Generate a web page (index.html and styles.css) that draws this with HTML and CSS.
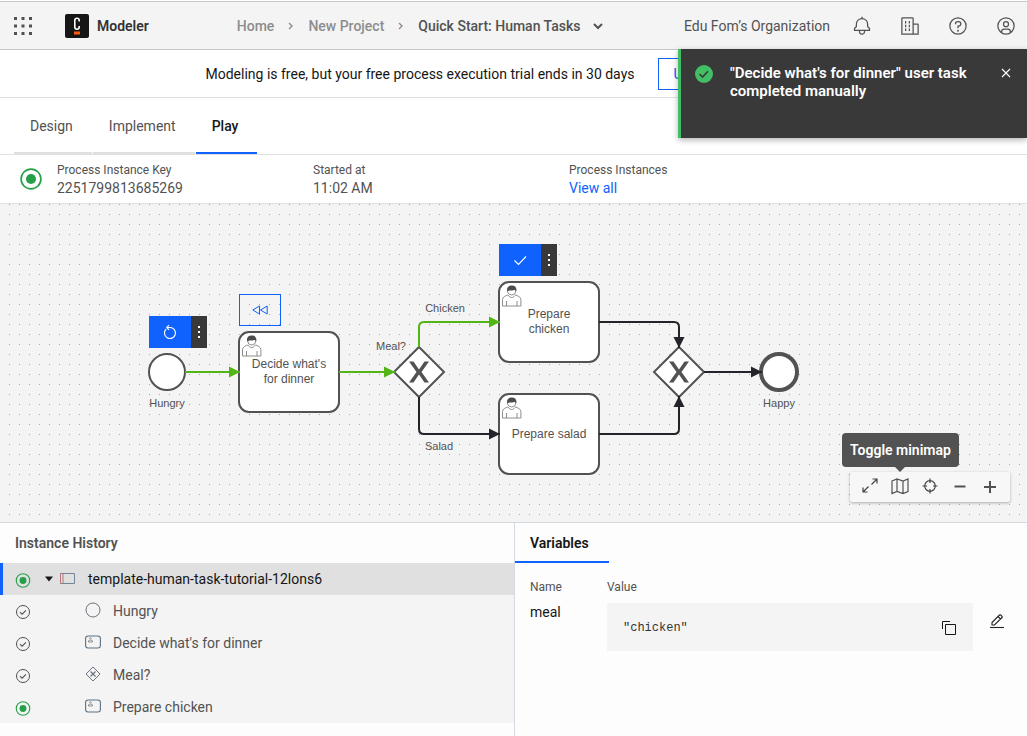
FILE: index.html
```html
<!DOCTYPE html>
<html lang="en">
<head>
<meta charset="utf-8">
<meta name="viewport" content="width=device-width, initial-scale=1">
<title>Modeler</title>
<link rel="stylesheet" href="styles.css">
</head>
<body>
<svg class="defs" aria-hidden="true">
  <symbol id="i-active" viewBox="0 0 20 20"><circle cx="10" cy="10" r="9" fill="none" stroke="#24a148" stroke-width="1.5"/><circle cx="10" cy="10" r="4.6" fill="#24a148"/></symbol>
  <symbol id="i-done" viewBox="0 0 16 16"><circle cx="8" cy="8" r="6.500" fill="none" stroke="#525252" stroke-width="1"/><path d="M5 8.200l2.100 2L11 6.300" fill="none" stroke="#525252" stroke-width="1.100"/></symbol>
  <symbol id="i-task" viewBox="0 0 16 16"><rect x=".6" y="2" width="14.800" height="12" rx="2.500" fill="none" stroke="#5a7187" stroke-width="1.100"/><path d="M3.500 8V6.800l1.500-.8h1l1.500.8V8zM4.500 4.800a1 1 0 0 1 2 0" fill="none" stroke="#777" stroke-width=".8"/></symbol>
  <symbol id="i-gate" viewBox="0 0 16 16"><path d="M8 1l7 7-7 7-7-7z" fill="none" stroke="#6b7480" stroke-width="1"/><path d="M5.500 5.500l5 5M10.500 5.500l-5 5" stroke="#6b7480" stroke-width="1.200"/></symbol>
  <symbol id="i-user" viewBox="0 0 20 22"><path d="M.5 21v-6.500c0-2.500 3.500-4 5.300-4.500l1 1c1.500 2 4.300 2 5.800 0l1-1c1.500.5 5.300 2 5.300 4.500V21zM4.500 21v-5M15 21v-5" fill="#fff" stroke="#8d8d8d" stroke-width="1"/><circle cx="9.700" cy="6" r="4" fill="#fff" stroke="#8d8d8d" stroke-width="1"/><path d="M5 6.500C4.500 1 8 .6 9.700.6c1.700 0 5.200.4 4.700 5.900-1-1.500-2-1.600-3-1.200-2 .6-4.500-.6-6.400 1.200z" fill="#4c4c4c"/></symbol>
  <symbol id="i-kebab" viewBox="0 0 16 16"><path d="M7 2h2v2H7zM7 7h2v2H7zM7 12h2v2H7z" fill="#fff"/></symbol>
</svg>

<header class="topbar">
  <button class="icon-btn switcher" aria-label="App switcher"><svg width="20" height="20" viewBox="0 0 20 20" fill="#525252"><path d="M1 1h3v3H1zM8.500 1h3v3h-3zM16 1h3v3h-3zM1 8.500h3v3H1zM8.500 8.500h3v3h-3zM16 8.500h3v3h-3zM1 16h3v3H1zM8.500 16h3v3h-3zM16 16h3v3h-3z"/></svg></button>
  <a class="brand" href="#">
    <svg width="24" height="24" viewBox="0 0 24 24"><rect width="24" height="24" rx="2" fill="#161616"/><path d="M14.200 7.500V6.500a2.200 2.200 0 0 0-4.400 0v6.500a2.200 2.200 0 0 0 4.400 0v-1" fill="none" stroke="#fff" stroke-width="1.600"/><path d="M9 17.500h6v3H9z" fill="#fc5d0d"/></svg>
    <span>Modeler</span>
  </a>
  <nav class="crumbs" aria-label="Breadcrumb">
    <a href="#">Home</a>
    <svg width="6" height="8" viewBox="0 0 6 8"><path d="M1 1l3 3-3 3" fill="none" stroke="#8d8d8d" stroke-width="1.400"/></svg>
    <a href="#">New Project</a>
    <svg width="6" height="8" viewBox="0 0 6 8"><path d="M1 1l3 3-3 3" fill="none" stroke="#8d8d8d" stroke-width="1.400"/></svg>
    <button class="current">Quick Start: Human Tasks <svg width="10" height="8" viewBox="0 0 10 8"><path d="M1 2l4 4 4-4" fill="none" stroke="#525252" stroke-width="2"/></svg></button>
  </nav>
  <span class="org">Edu Fom’s Organization</span>
  <div class="tools">
    <button class="icon-btn" aria-label="Notifications"><svg width="20" height="20" viewBox="0 0 32 32" fill="#525252"><path d="M28.707 19.293L26 16.586V13a10.014 10.014 0 0 0-9-9.950V1h-2v2.050A10.014 10.014 0 0 0 6 13v3.586l-2.707 2.707A1 1 0 0 0 3 20v3a1 1 0 0 0 1 1h7v.777a5.152 5.152 0 0 0 4.500 5.199A5.006 5.006 0 0 0 21 25v-1h7a1 1 0 0 0 1-1v-3a1 1 0 0 0-.293-.707zM19 25a3 3 0 0 1-6 0v-1h6zm8-3H5v-1.586l2.707-2.707A1 1 0 0 0 8 17v-4a8 8 0 0 1 16 0v4a1 1 0 0 0 .293.707L27 20.414z"/></svg></button>
    <button class="icon-btn" aria-label="Organization"><svg width="20" height="20" viewBox="0 0 32 32" fill="#525252"><path d="M8 8h2v4H8zM8 14h2v4H8zM14 8h2v4h-2zM14 14h2v4h-2zM8 20h2v4H8zM14 20h2v4h-2z"/><path d="M30 14a2 2 0 0 0-2-2h-6V4a2 2 0 0 0-2-2H4a2 2 0 0 0-2 2v26h28zM4 4h16v24H4zm18 24V14h6v14z"/></svg></button>
    <button class="icon-btn" aria-label="Help"><svg width="20" height="20" viewBox="0 0 32 32" fill="#525252"><path d="M16 2a14 14 0 1 0 14 14A14 14 0 0 0 16 2zm0 26a12 12 0 1 1 12-12 12 12 0 0 1-12 12z"/><circle cx="16" cy="23.500" r="1.500"/><path d="M17 8h-1.500a4.490 4.490 0 0 0-4.500 4.500v.5h2v-.5a2.500 2.500 0 0 1 2.500-2.500H17a2.500 2.500 0 0 1 0 5h-2v4.500h2V17a4.500 4.500 0 0 0 0-9z"/></svg></button>
    <button class="icon-btn" aria-label="Account"><svg width="20" height="20" viewBox="0 0 32 32" fill="#525252"><path d="M16 8a5 5 0 1 0 5 5 5 5 0 0 0-5-5zm0 8a3 3 0 1 1 3-3 3 3 0 0 1-3 3z"/><path d="M16 2a14 14 0 1 0 14 14A14 14 0 0 0 16 2zm-6 24.377V25a3 3 0 0 1 3-3h6a3 3 0 0 1 3 3v1.377a11.900 11.900 0 0 1-12 0zm13.993-1.451A5 5 0 0 0 19 20h-6a5 5 0 0 0-4.992 4.926 12 12 0 1 1 15.985 0z"/></svg></button>
  </div>
</header>

<div class="banner"><span>Modeling is free, but your free process execution trial ends in 30 days</span><button class="upgrade">Upgrade</button></div>

<nav class="tabs" aria-label="Mode">
  <a href="#">Design</a><a href="#">Implement</a><a href="#" class="active" aria-current="page">Play</a>
</nav>

<section class="info">
  <svg class="info-status" width="22" height="22"><use href="#i-active"/></svg>
  <div class="fact"><span class="label">Process Instance Key</span><span>2251799813685269</span></div>
  <div class="fact"><span class="label">Started at</span><span>11:02 AM</span></div>
  <div class="fact"><span class="label">Process Instances</span><a href="#">View all</a></div>
</section>

<main class="canvas">
  <svg class="diagram" role="img" aria-label="Process diagram">
    <defs>
      <marker id="green" viewBox="0 0 11 12" refX="11" refY="6" markerWidth="11" markerHeight="12" markerUnits="userSpaceOnUse" orient="auto"><path d="M0 .5L11 6 0 11.500z" fill="#52b415"/></marker>
      <marker id="dark" viewBox="0 0 11 12" refX="11" refY="6" markerWidth="11" markerHeight="12" markerUnits="userSpaceOnUse" orient="auto"><path d="M0 .5L11 6 0 11.500z" fill="#22242a"/></marker>
    </defs>
    <g class="shape">
      <circle cx="167" cy="168" r="18"/>
      <rect x="239" y="128" width="100" height="80" rx="10"/>
      <rect x="499" y="78" width="100" height="80" rx="10"/>
      <rect x="499" y="190" width="100" height="80" rx="10"/>
      <path d="M419 143l25 25-25 25-25-25zM679 143l25 25-25 25-25-25z"/>
      <circle class="end" cx="779" cy="168" r="18"/>
    </g>
    <path class="cross" d="M409 157.500h4.500l5.500 8 5.500-8h4.500l-7.500 10.500 7.500 10.500h-4.500l-5.500-8-5.500 8H409l7.500-10.500z"/>
    <path class="cross" d="M669 157.500h4.500l5.500 8 5.500-8h4.500l-7.500 10.500 7.500 10.500h-4.500l-5.500-8-5.500 8H669l7.500-10.500z"/>
    <g class="flow taken">
      <path d="M185 168H240"/><path d="M339 168H395"/><path d="M419 143v-20q0-5 5-5h76"/>
    </g>
    <g class="flow">
      <path d="M419 193v32q0 5 5 5h76"/><path d="M599 118h75q5 0 5 5v21"/><path d="M599 230h75q5 0 5-5v-33"/><path d="M704 168h58"/>
    </g>
    <use href="#i-user" x="242" y="131" width="20" height="22"/>
    <use href="#i-user" x="502" y="81" width="20" height="22"/>
    <use href="#i-user" x="502" y="193" width="20" height="22"/>
    <g class="task-text">
      <text x="289" y="164">Decide what's</text><text x="289" y="179">for dinner</text>
      <text x="549" y="114">Prepare</text><text x="549" y="129">chicken</text>
      <text x="549" y="234">Prepare salad</text>
    </g>
    <g class="label-text">
      <text x="167" y="203">Hungry</text><text x="391" y="146">Meal?</text><text x="445" y="108">Chicken</text><text x="439" y="246">Salad</text><text x="779" y="203">Happy</text>
    </g>
  </svg>

  <div class="overlay at-start">
    <button class="act" aria-label="Restart process"><svg width="16" height="16" viewBox="0 0 16 16" fill="none" stroke="#fff" stroke-width="1.100"><path d="M4.200 5A5.500 5.500 0 1 0 8 3.500H5M7 1.200L4.700 3.500 7 5.800"/></svg></button><button class="more" aria-label="More options"><svg width="16" height="16"><use href="#i-kebab"/></svg></button>
  </div>
  <div class="overlay at-decide">
    <button class="rewind" aria-label="Rewind"><svg width="16" height="16" viewBox="0 0 16 16" fill="none" stroke="#0f62fe" stroke-width="1"><path d="M7.500 4v8L.8 8zM15.200 4v8L8.500 8z"/></svg></button>
  </div>
  <div class="overlay at-chicken">
    <button class="act" aria-label="Complete task"><svg width="16" height="16" viewBox="0 0 16 16" fill="none" stroke="#fff" stroke-width="1.100"><path d="M2.500 8.500l4 4 7.500-8"/></svg></button><button class="more" aria-label="More options"><svg width="16" height="16"><use href="#i-kebab"/></svg></button>
  </div>

  <div class="controls">
    <span class="tooltip" role="tooltip">Toggle minimap</span>
    <button aria-label="Fullscreen"><svg width="18" height="18" viewBox="0 0 18 18" fill="none" stroke="#444" stroke-width="1.200"><path d="M10.500 7.500l5.500-5.500M11.500 2H16v4.500M7.500 9.500L2 15M6.500 15H2v-4.500"/></svg></button>
    <button aria-label="Toggle minimap"><svg width="18" height="18" viewBox="0 0 18 18" fill="none" stroke="#525252" stroke-width="1.200"><path d="M1 4l5-2 6 2 5-2v12.500l-5 2-6-2-5 2zM6 2v12.500M12 4v12.500"/></svg></button>
    <button aria-label="Reset view"><svg width="18" height="18" viewBox="0 0 18 18" fill="none" stroke="#444" stroke-width="1.200"><circle cx="9" cy="9" r="5.300"/><path d="M9 1.500v4.500M9 12v4.500M1.500 9H6M12 9h4.500"/></svg></button>
    <button aria-label="Zoom out"><svg width="18" height="18" viewBox="0 0 18 18"><path d="M3.500 8.500h11v2h-11z" fill="#525252"/></svg></button>
    <button aria-label="Zoom in"><svg width="18" height="18" viewBox="0 0 18 18"><path d="M3 9h5V4h2v5h5v2h-5v5H8v-5H3z" fill="#525252"/></svg></button>
  </div>
</main>

<div class="bottom">
  <section class="history">
    <h2>Instance History</h2>
    <ul>
      <li class="root"><svg class="state" width="16" height="15"><use href="#i-active"/></svg><svg class="caret" width="8" height="6" viewBox="0 0 8 6"><path d="M0 .5h8L4 5.500z" fill="#161616"/></svg><svg class="kind" width="16" height="16" viewBox="0 0 16 16" fill="none"><path d="M.5 2.500h14v10H.5z" stroke="#71859b"/><path d="M.5 2.500v10M3 2.500v10" stroke="#b77777"/></svg><span>template-human-task-tutorial-12lons6</span></li>
      <li><svg class="state" width="16" height="16"><use href="#i-done"/></svg><svg class="kind" width="16" height="16" viewBox="0 0 16 16"><circle cx="8" cy="8" r="7" fill="none" stroke="#69727d"/></svg><span>Hungry</span></li>
      <li><svg class="state" width="16" height="16"><use href="#i-done"/></svg><svg class="kind" width="16" height="16"><use href="#i-task"/></svg><span>Decide what's for dinner</span></li>
      <li><svg class="state" width="16" height="16"><use href="#i-done"/></svg><svg class="kind" width="16" height="16"><use href="#i-gate"/></svg><span>Meal?</span></li>
      <li><svg class="state" width="16" height="15"><use href="#i-active"/></svg><svg class="kind" width="16" height="16"><use href="#i-task"/></svg><span>Prepare chicken</span></li>
    </ul>
  </section>
  <section class="variables">
    <h2>Variables</h2>
    <table>
      <thead><tr><th>Name</th><th>Value</th><th aria-label="Actions"></th></tr></thead>
      <tbody><tr>
        <td>meal</td>
        <td><div class="snippet"><code>"chicken"</code><button class="icon-btn" aria-label="Copy"><svg width="16" height="16" viewBox="0 0 16 16" fill="none" stroke="#161616"><path d="M4.500 4.500h10v10h-10zM1.500 9V1.500H9"/></svg></button></div></td>
        <td class="edit"><button class="icon-btn" aria-label="Edit meal"><svg width="16" height="16" viewBox="0 0 16 16" fill="none" stroke="#222" stroke-width="1.100"><path d="M1 14.500h14"/><path d="M3 12V9.500l7.500-7.500q.6-.6 1.200 0l1.300 1.300q.6.600 0 1.200L5.500 12zM9 3.500L11.500 6"/></svg></button></td>
      </tr></tbody>
    </table>
  </section>
</div>

<aside class="toast" role="status">
  <svg width="20" height="20" viewBox="0 0 20 20"><circle cx="10" cy="10" r="9" fill="#42be65"/><path d="M5.500 10l3 3L14 7.300" fill="none" stroke="#393939" stroke-width="1.600"/></svg>
  <p>"Decide what's for dinner" user task completed manually</p>
  <button class="icon-btn" aria-label="Close"><svg width="10" height="10" viewBox="0 0 10 10"><path d="M1 1l8 8M9 1L1 9" stroke="#fff" stroke-width="1.100"/></svg></button>
</aside>
</body>
</html>
```
FILE: styles.css
```css
* { box-sizing: border-box; }

body {
  margin: 0;
  min-height: 100vh;
  display: flex;
  flex-direction: column;
  background: #fff;
  color: #525252;
  font: 14px/18px Roboto, "Noto Sans", sans-serif;
}

button { font: inherit; color: inherit; margin: 0; padding: 0; border: 0; background: none; cursor: pointer; }
a { color: inherit; text-decoration: none; }
svg { display: block; flex: none; }
h2, p, ul { margin: 0; padding: 0; }
ul { list-style: none; }
.defs { position: absolute; width: 0; height: 0; }
.icon-btn { display: grid; place-items: center; }

/* Header */
.topbar {
  display: flex;
  align-items: center;
  height: 49px;
  margin-top: 1px;
  padding: 0 11px 0 13px;
  background: #f4f4f4;
  border-top: 1px solid #c6c6c6;
  border-bottom: 1px solid #c6c6c6;
}
.brand { display: flex; align-items: center; gap: 8px; margin-left: 32px; color: #333; font-weight: 600; }
.crumbs { display: flex; align-items: center; gap: 14px; margin-left: 88px; color: #8d8d8d; font-weight: 500; }
.current { display: flex; align-items: center; gap: 12px; color: #525252; font-weight: 500; }
.org { margin-left: auto; }
.tools { display: flex; gap: 28px; margin-left: 22px; }

/* Trial banner */
.banner {
  display: flex;
  align-items: center;
  justify-content: center;
  gap: 8px;
  height: 48px;
  border-bottom: 1px solid #e0e0e0;
  color: #161616;
}
.banner span { min-width: 444px; }
.upgrade { height: 32px; padding: 0 15px; min-width: 164px; border: 1px solid #0f62fe; color: #0f62fe; text-align: left; }

/* Tabs */
.tabs { display: flex; gap: 1px; height: 57px; padding-left: 14px; border-bottom: 1px solid #e0e0e0; }
.tabs a { display: flex; align-items: center; padding: 2px 19px 0 16px; border-bottom: 2px solid #e0e0e0; }
.tabs .active { border-color: #0f62fe; color: #161616; font-weight: 500; }

/* Instance facts */
.info { display: grid; grid-template-columns: 37px repeat(3, 1fr); padding: 6px 202px 6px 20px; height: 49px; border-bottom: 1px solid #e0e0e0; }
.info-status { align-self: center; }
.fact { display: flex; flex-direction: column; }
.label { font-size: 12px; }
.fact a { color: #0f62fe; }

/* Canvas */
.canvas {
  position: relative;
  flex: 1;
  min-height: 318px;
  background: #f4f4f4 conic-gradient(from 270deg at 1px 1px, #aaa 90deg, transparent 0) 9px 0 / 10px 10px;
  overflow: hidden;
}
.diagram { width: 100%; height: 100%; position: absolute; }
.shape { fill: #fff; stroke: #525252; stroke-width: 2; }
.shape .end { stroke-width: 4; }
.cross { fill: #525252; }
.flow { fill: none; stroke: #22242a; stroke-width: 2; }
.flow path { marker-end: url(#dark); }
.taken { stroke: #52b415; }
.taken path { marker-end: url(#green); }
.task-text, .label-text { font-family: "Liberation Sans", Arial, sans-serif; font-size: 12px; fill: #525252; text-anchor: middle; }
.label-text { font-size: 11px; }
.overlay { position: absolute; display: flex; height: 32px; }
.overlay button { display: grid; place-items: center; }
.at-start { left: 149px; top: 112px; }
.at-decide { left: 239px; top: 90px; }
.at-chicken { left: 499px; top: 40px; }
.act, .rewind { width: 42px; }
.act { background: #0f62fe; }
.more { width: 16px; background: #393939; }
.rewind { border: 1px solid #0f62fe; }

.controls {
  position: absolute;
  right: 17px;
  bottom: 20px;
  display: flex;
  height: 30px;
  padding: 0 5px 2px;
  background: #f7f7f7;
  border-radius: 2px;
  box-shadow: 0 1px 3px rgba(0, 0, 0, .3);
}
.controls button { display: grid; place-items: center; width: 30px; }
.tooltip {
  position: absolute;
  left: -8px;
  bottom: 35px;
  padding: 8px;
  border-radius: 4px;
  background: #525252;
  color: #fff;
  font-weight: 600;
  white-space: nowrap;
}
.tooltip::after { content: ""; position: absolute; left: 50%; top: 100%; margin-left: -5px; border: 5px solid transparent; border-bottom: 0; border-top-color: #525252; }

/* Bottom panels */
.bottom { display: grid; grid-template-columns: 514px 1fr; min-height: 214px; border-top: 1px solid #d5dae1; background: #fdfdfd; }
h2 { font-size: 14px; line-height: 18px; font-weight: 600; }
.history h2 { padding: 11px 15px; }
.history li { display: flex; align-items: center; height: 32px; padding-left: 15px; background: #f4f4f4; }
.history .state { margin-top: 2px; }
.history .kind { margin: 0 12px 2px 54px; }
.history .root { padding-left: 12px; border-left: 3px solid #0f62fe; background: #e0e0e0; color: #161616; }
.root .caret { margin-left: 14px; }
.history .root .kind { margin-left: 7px; margin-bottom: 0; }

.variables { border-left: 1px solid #d5dae1; }
.variables h2 { width: 94px; padding: 11px 15px 9px; border-bottom: 2px solid #0f62fe; color: #161616; }
table { width: 100%; border-spacing: 0; margin-top: 15px; }
th { padding: 0; font-size: 12px; font-weight: 400; text-align: left; }
th:first-child { width: 92px; padding-left: 15px; }
th:last-child { width: 54px; }
td { padding: 7px 0 0; color: #161616; vertical-align: top; }
td:first-child { padding-left: 15px; }
.snippet { display: flex; align-items: center; justify-content: space-between; height: 48px; padding: 1px 16px 0; background: #f4f4f4; }
code { font: 12px/16px "Liberation Mono", monospace; color: #333; }
.edit { padding: 17px 0 0 16px; }

/* Notification */
.toast {
  position: absolute;
  top: 49px;
  right: 0;
  display: flex;
  align-items: flex-start;
  width: 349px;
  min-height: 89px;
  padding: 15px 16px 16px 13px;
  background: #393939;
  color: #fff;
  border-left: 3px solid #42be65;
  font-size: 15px;
  font-weight: 600;
  box-shadow: 0 2px 6px rgba(0, 0, 0, .3);
}
.toast p { flex: 1; margin-left: 16px; }
.toast .icon-btn { margin: 4px 0 0 16px; }
```
